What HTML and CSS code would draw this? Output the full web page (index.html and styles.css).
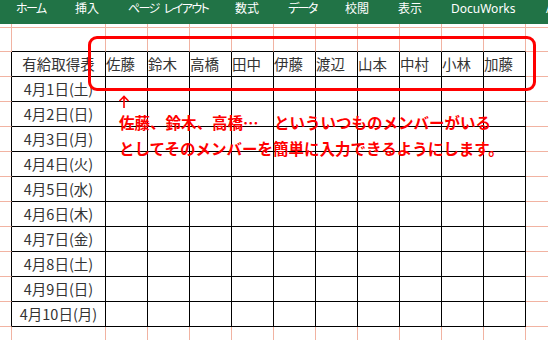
FILE: index.html
```html
<!DOCTYPE html>
<html>
<head>
  <title>有給取得表</title>
  <link rel="stylesheet" href="styles.css">
</head>
<body>
  <div class="ribbon">
    <span class="tab kana home">ホーム</span>
    <span class="tab insert">挿入</span>
    <span class="tab kana layout">ページ レイアウト</span>
    <span class="tab formula">数式</span>
    <span class="tab kana data">データ</span>
    <span class="tab review">校閲</span>
    <span class="tab view">表示</span>
    <span class="tab docu latin">DocuWorks</span>
    <span class="tab latin">Acrobat</span>
  </div>

  <div class="sheet">
    <table class="grid">
      <colgroup>
        <col class="c-a"><col class="c-b">
        <col class="c-n"><col class="c-n"><col class="c-n"><col class="c-n"><col class="c-n">
        <col class="c-n"><col class="c-n"><col class="c-n"><col class="c-n"><col class="c-n">
        <col class="c-m">
      </colgroup>
      <tr class="r-top">
        <td></td><td></td><td></td><td></td><td></td><td></td><td></td><td></td><td></td><td></td><td></td><td></td><td></td>
      </tr>
      <tr class="r-first">
        <td></td><td class="above"></td><td class="above"></td><td class="above"></td><td class="above"></td><td class="above"></td><td class="above"></td><td class="above"></td><td class="above"></td><td class="above"></td><td class="above"></td><td class="above"></td><td></td>
      </tr>
      <tr class="row">
        <td class="lead"></td>
        <td class="t day">有給取得表</td>
        <td class="t name">佐藤</td>
        <td class="t name">鈴木</td>
        <td class="t name">高橋</td>
        <td class="t name">田中</td>
        <td class="t name">伊藤</td>
        <td class="t name">渡辺</td>
        <td class="t name">山本</td>
        <td class="t name">中村</td>
        <td class="t name">小林</td>
        <td class="t name">加藤</td>
        <td></td>
      </tr>
      <tr class="row"><td class="lead"></td><td class="t day">4月1日(土)</td><td class="t"></td><td class="t"></td><td class="t"></td><td class="t"></td><td class="t"></td><td class="t"></td><td class="t"></td><td class="t"></td><td class="t"></td><td class="t"></td><td></td></tr>
      <tr class="row"><td class="lead"></td><td class="t day">4月2日(日)</td><td class="t"></td><td class="t"></td><td class="t"></td><td class="t"></td><td class="t"></td><td class="t"></td><td class="t"></td><td class="t"></td><td class="t"></td><td class="t"></td><td></td></tr>
      <tr class="row"><td class="lead"></td><td class="t day">4月3日(月)</td><td class="t"></td><td class="t"></td><td class="t"></td><td class="t"></td><td class="t"></td><td class="t"></td><td class="t"></td><td class="t"></td><td class="t"></td><td class="t"></td><td></td></tr>
      <tr class="row"><td class="lead"></td><td class="t day">4月4日(火)</td><td class="t"></td><td class="t"></td><td class="t"></td><td class="t"></td><td class="t"></td><td class="t"></td><td class="t"></td><td class="t"></td><td class="t"></td><td class="t"></td><td></td></tr>
      <tr class="row"><td class="lead"></td><td class="t day">4月5日(水)</td><td class="t"></td><td class="t"></td><td class="t"></td><td class="t"></td><td class="t"></td><td class="t"></td><td class="t"></td><td class="t"></td><td class="t"></td><td class="t"></td><td></td></tr>
      <tr class="row"><td class="lead"></td><td class="t day">4月6日(木)</td><td class="t"></td><td class="t"></td><td class="t"></td><td class="t"></td><td class="t"></td><td class="t"></td><td class="t"></td><td class="t"></td><td class="t"></td><td class="t"></td><td></td></tr>
      <tr class="row"><td class="lead"></td><td class="t day">4月7日(金)</td><td class="t"></td><td class="t"></td><td class="t"></td><td class="t"></td><td class="t"></td><td class="t"></td><td class="t"></td><td class="t"></td><td class="t"></td><td class="t"></td><td></td></tr>
      <tr class="row"><td class="lead"></td><td class="t day">4月8日(土)</td><td class="t"></td><td class="t"></td><td class="t"></td><td class="t"></td><td class="t"></td><td class="t"></td><td class="t"></td><td class="t"></td><td class="t"></td><td class="t"></td><td></td></tr>
      <tr class="row"><td class="lead"></td><td class="t day">4月9日(日)</td><td class="t"></td><td class="t"></td><td class="t"></td><td class="t"></td><td class="t"></td><td class="t"></td><td class="t"></td><td class="t"></td><td class="t"></td><td class="t"></td><td></td></tr>
      <tr class="row"><td class="lead"></td><td class="t day">4月10日(月)</td><td class="t"></td><td class="t"></td><td class="t"></td><td class="t"></td><td class="t"></td><td class="t"></td><td class="t"></td><td class="t"></td><td class="t"></td><td class="t"></td><td></td></tr>
      <tr class="row">
        <td></td><td></td><td></td><td></td><td></td><td></td><td></td><td></td><td></td><td></td><td></td><td></td><td></td>
      </tr>
    </table>

    <div class="callout"></div>
    <svg class="arrow" width="14" height="14" viewBox="0 0 14 14">
      <path d="M7 1.5V13M2.5 6L7 1.5L11.5 6" fill="none" stroke="#ff0000" stroke-width="1.6"/>
    </svg>
    <p class="note">佐藤、鈴木、高橋…　といういつものメンバーがいる<br>としてそのメンバーを簡単に入力できるようにします。</p>
  </div>
</body>
</html>
```

FILE: styles.css
```css
html{
  width: 548px;
  height: 340px;
}
body {
  margin: 0;
  width: 548px;
  height: 340px;
  overflow: hidden;
  background-color: #ffffff;
  font-family: "Noto Sans CJK JP", sans-serif;
}

.ribbon {
  display: flex;
  height: 24px;
  padding-left: 16px;
  background-color: #217346;
  overflow: hidden;
  white-space: nowrap;
}

.tab {
  flex: none;
  color: #ffffff;
  font-size: 12px;
  line-height: 16px;
  font-feature-settings: "palt";
}

.kana { letter-spacing: -1.6px; }

.home { width: 59px; }
.insert { width: 53px; }
.layout { width: 107px; word-spacing: 4px; }
.formula { width: 53px; }
.data { width: 57px; }
.review { width: 53px; }
.view { width: 53px; }
.docu { width: 95px; }

.latin {
  font-family: "Noto Sans", sans-serif;
  line-height: 17px;
}

.sheet {
  position: relative;
}

.grid {
  table-layout: fixed;
  width: 560px;
  border-collapse: separate;
  border-spacing: 0;
}

.c-a { width: 12px; }
.c-b { width: 94px; }
.c-n { width: 42px; }
.c-m { width: 34px; }

.grid td {
  box-sizing: border-box;
  padding: 0;
  border-right: 1px solid #f1b3a2;
  border-bottom: 1px solid #f1b3a2;
  font-size: 14.5px;
  line-height: 20px;
  color: #333333;
  white-space: nowrap;
  overflow: hidden;
}

.r-top { height: 4px; }
.r-first { height: 24px; }
.row { height: 25px; }

.grid td.t {
  border-right-color: #000000;
  border-bottom-color: #000000;
}
.grid td.lead {
  border-right-color: #000000;
}
.grid td.above {
  border-bottom-color: #000000;
}

.day {
  text-align: center;
}

.name {
  padding-left: 2px;
  color: #4a4a4a;
}

.callout {
  position: absolute;
  left: 88px;
  top: 12px;
  width: 448px;
  height: 55px;
  box-sizing: border-box;
  border: 3px solid #ff0000;
  border-radius: 9px;
}

.arrow {
  position: absolute;
  left: 117px;
  top: 71px;
}

.note {
  position: absolute;
  left: 119px;
  top: 85px;
  margin: 0;
  color: #ff0000;
  font-size: 15.5px;
  font-weight: bold;
  line-height: 26px;
  white-space: nowrap;
}
```
